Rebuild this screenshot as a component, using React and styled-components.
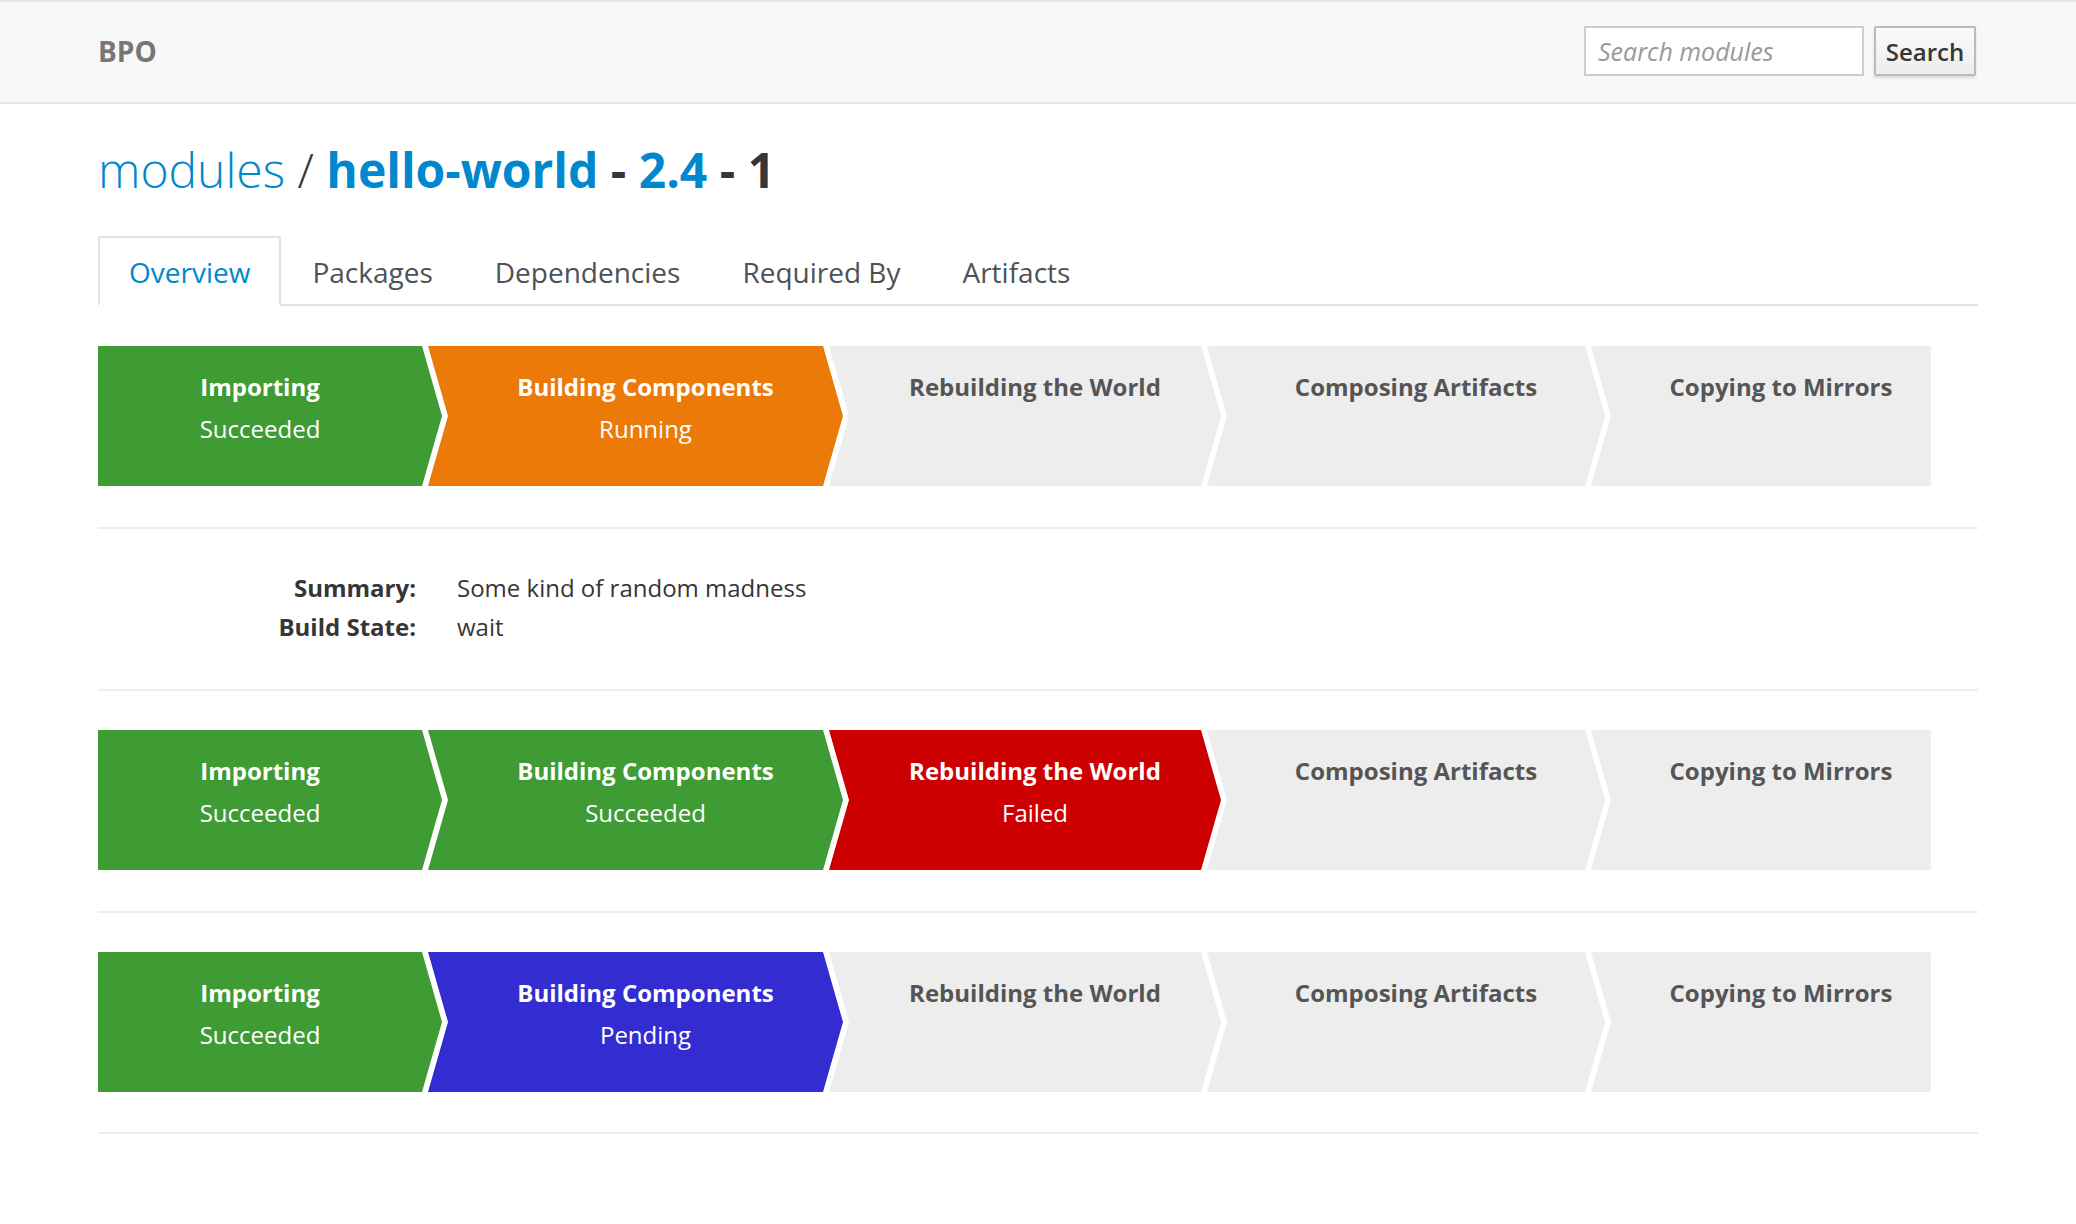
import React from 'react';
import styled, { createGlobalStyle } from 'styled-components';

const GlobalStyle = createGlobalStyle`
  html, body {
    margin: 0;
    padding: 0;
    background: #fff;
    font-family: "Open Sans", "Liberation Sans", sans-serif;
    color: #363636;
  }
  * { box-sizing: border-box; }
`;

const Navbar = styled.div`
  background: #f8f8f8;
  border-top: 2px solid #e7e7e7;
  border-bottom: 2px solid #e7e7e7;
`;

const Container = styled.div`
  width: 1880px;
  margin: 0 auto;
`;

const NavInner = styled(Container)`
  height: 100px;
  display: flex;
  align-items: center;
  justify-content: space-between;
  padding-bottom: 2px;
`;

const Brand = styled.div`
  font-size: 28px;
  font-weight: 700;
  color: #777;
`;

const SearchForm = styled.form`
  display: flex;
  gap: 10px;
  margin-right: 2px;
`;

const SearchInput = styled.input`
  width: 280px;
  height: 50px;
  border: 2px solid #ccc;
  border-radius: 1px;
  padding: 0 12px;
  font-family: inherit;
  font-size: 25px;
  background: #fff;
  &::placeholder {
    color: #999;
    font-style: italic;
  }
`;

const SearchButton = styled.button`
  width: 102px;
  height: 50px;
  border: 2px solid #bbb;
  border-radius: 2px;
  background: linear-gradient(#fafafa, #ededed);
  box-shadow: 0 2px 3px rgba(0, 0, 0, 0.12);
  font-family: inherit;
  font-size: 24px;
  font-weight: 600;
  color: #363636;
  padding: 0;
`;

const Title = styled.h1`
  margin: 40px 0 41px;
  font-size: 48px;
  line-height: 51px;
  font-weight: 400;
  color: #363636;
`;

const Crumb = styled.span`
  color: ${(p) => (p.$muted ? '#363636' : '#0088ce')};
  font-weight: ${(p) => (p.$light ? 300 : 700)};
`;

const Tabs = styled.ul`
  display: flex;
  list-style: none;
  margin: 0;
  padding: 0;
  border-bottom: 2px solid #e2e2e2;
`;

const Tab = styled.li`
  margin-bottom: -2px;
  padding: 14px 29px 12px;
  line-height: 40px;
  font-size: 28px;
  color: ${(p) => (p.$active ? '#0088ce' : '#4d5258')};
  background: ${(p) => (p.$active ? '#fff' : 'transparent')};
  border: 2px solid ${(p) => (p.$active ? '#e2e2e2' : 'transparent')};
  border-bottom-color: ${(p) => (p.$active ? '#fff' : 'transparent')};
  border-radius: 2px 2px 0 0;
`;

const Section = styled.div`
  padding: ${(p) => p.$pad || '40px 0 41px'};
  border-bottom: 2px solid #eee;
`;

const Pipeline = styled.div`
  display: flex;
  height: 140px;
`;

const clips = {
  first: 'polygon(0 0, calc(100% - 20px) 0, 100% 50%, calc(100% - 20px) 100%, 0 100%)',
  middle: 'polygon(0 0, calc(100% - 20px) 0, 100% 50%, calc(100% - 20px) 100%, 0 100%, 20px 50%)',
  last: 'polygon(0 0, 100% 0, 100% 100%, 0 100%, 20px 50%)',
};

const pads = {
  first: '20px 20px 0 0',
  middle: '20px 20px 0 40px',
  last: '20px 0 0 40px',
};

const Step = styled.div`
  flex: none;
  height: 140px;
  margin-left: ${(p) => (p.$pos === 'first' ? '0' : '-14px')};
  padding: ${(p) => pads[p.$pos]};
  background: ${(p) => p.$bg};
  color: ${(p) => (p.$active ? '#fff' : '#555')};
  clip-path: ${(p) => clips[p.$pos]};
  border-radius: ${(p) => (p.$pos === 'last' ? '0 3px 3px 0' : '0')};
  text-align: center;
  font-size: 24px;
  line-height: 42px;
`;

const StepTitle = styled.div`
  font-weight: 700;
  white-space: nowrap;
`;

const StepStatus = styled.div`
  font-weight: 400;
`;

const Details = styled.dl`
  display: grid;
  grid-template-columns: 318px 1fr;
  column-gap: 41px;
  margin: 0;
  font-size: 24px;
  line-height: 39px;
`;

const Term = styled.dt`
  text-align: right;
  font-weight: 700;
`;

const Desc = styled.dd`
  margin: 0;
`;

const STEPS = [
  { title: 'Importing', width: 344 },
  { title: 'Building Components', width: 415 },
  { title: 'Rebuilding the World', width: 392 },
  { title: 'Composing Artifacts', width: 398 },
  { title: 'Copying to Mirrors', width: 340 },
];

const COLORS = {
  Succeeded: '#3f9c35',
  Running: '#ec7a08',
  Failed: '#cc0000',
  Pending: '#332dd1',
};

const PIPELINES = [
  ['Succeeded', 'Running'],
  ['Succeeded', 'Succeeded', 'Failed'],
  ['Succeeded', 'Pending'],
];

function StepRow({ states }) {
  return (
    <Pipeline>
      {STEPS.map((step, i) => {
        const status = states[i];
        const pos = i === 0 ? 'first' : i === STEPS.length - 1 ? 'last' : 'middle';
        return (
          <Step
            key={step.title}
            $pos={pos}
            $bg={status ? COLORS[status] : '#ededed'}
            $active={!!status}
            style={{ width: step.width }}
          >
            <StepTitle>{step.title}</StepTitle>
            {status && <StepStatus>{status}</StepStatus>}
          </Step>
        );
      })}
    </Pipeline>
  );
}

export default function App() {
  return (
    <>
      <GlobalStyle />
      <Navbar>
        <NavInner>
          <Brand>BPO</Brand>
          <SearchForm onSubmit={(e) => e.preventDefault()}>
            <SearchInput placeholder="Search modules" />
            <SearchButton type="submit">Search</SearchButton>
          </SearchForm>
        </NavInner>
      </Navbar>
      <Container>
        <Title>
          <Crumb $light>modules</Crumb> <Crumb $muted $light>/</Crumb>{' '}
          <Crumb>hello-world</Crumb> <Crumb $muted>-</Crumb> <Crumb>2.4</Crumb>{' '}
          <Crumb $muted>- 1</Crumb>
        </Title>
        <Tabs>
          <Tab $active>Overview</Tab>
          <Tab>Packages</Tab>
          <Tab>Dependencies</Tab>
          <Tab>Required By</Tab>
          <Tab>Artifacts</Tab>
        </Tabs>
        <Section>
          <StepRow states={PIPELINES[0]} />
        </Section>
        <Section $pad="39px 0 43px">
          <Details>
            <Term>Summary:</Term>
            <Desc>Some kind of random madness</Desc>
            <Term>Build State:</Term>
            <Desc>wait</Desc>
          </Details>
        </Section>
        <Section $pad="39px 0 41px">
          <StepRow states={PIPELINES[1]} />
        </Section>
        <Section $pad="39px 0 40px">
          <StepRow states={PIPELINES[2]} />
        </Section>
      </Container>
    </>
  );
}
